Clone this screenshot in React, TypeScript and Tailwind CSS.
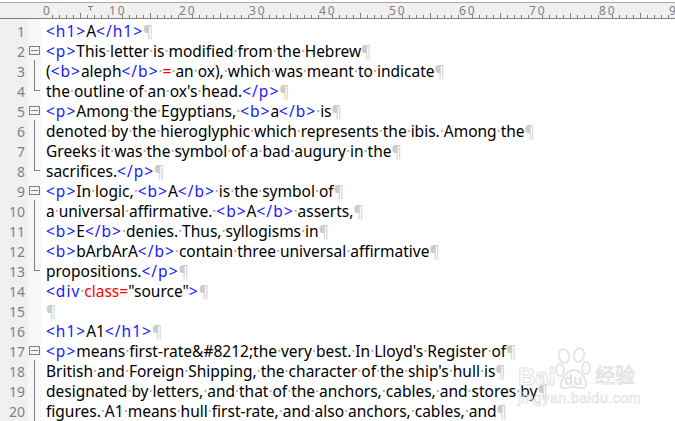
const BLUE = "text-[#1a1aff] tracking-[1px]";
const RED = "text-[#ff0000]";
const INK = "text-[#000000]";

type Seg = [string, string?];
type Line = { segs: Seg[]; fold?: "open" | "mid" | "end" };

const tag = (t: string): Seg => [t, BLUE];

const LINES: Line[] = [
  { segs: [tag("<h1>"), ["A"], tag("</h1>")] },
  { segs: [tag("<p>"), ["This letter is modified from the Hebrew"]], fold: "open" },
  { segs: [["("], tag("<b>"), ["aleph"], tag("</b>"), [" "], ["=", RED], [" an ox), which was meant to indicate"]], fold: "mid" },
  { segs: [["the outline of an ox's head."], tag("</p>")], fold: "end" },
  { segs: [tag("<p>"), ["Among the Egyptians, "], tag("<b>"), ["a"], tag("</b>"), [" is"]], fold: "open" },
  { segs: [["denoted by the hieroglyphic which represents the ibis. Among the"]], fold: "mid" },
  { segs: [["Greeks it was the symbol of a bad augury in the"]], fold: "mid" },
  { segs: [["sacrifices."], tag("</p>")], fold: "end" },
  { segs: [tag("<p>"), ["In logic, "], tag("<b>"), ["A"], tag("</b>"), [" is the symbol of"]], fold: "open" },
  { segs: [["a universal affirmative. "], tag("<b>"), ["A"], tag("</b>"), [" asserts,"]], fold: "mid" },
  { segs: [tag("<b>"), ["E"], tag("</b>"), [" denies. Thus, syllogisms in"]], fold: "mid" },
  { segs: [tag("<b>"), ["bArbArA"], tag("</b>"), [" contain three universal affirmative"]], fold: "mid" },
  { segs: [["propositions."], tag("</p>")], fold: "end" },
  { segs: [tag("<div"), [" "], ["class=", RED], ['"source"'], tag(">")] },
  { segs: [] },
  { segs: [tag("<h1>"), ["A1"], tag("</h1>")] },
  { segs: [tag("<p>"), ["means first-rate&#8212;the very best. In Lloyd's Register of"]], fold: "open" },
  { segs: [["British and Foreign Shipping, the character of the ship's hull is"]], fold: "mid" },
  { segs: [["designated by letters, and that of the anchors, cables, and stores by"]], fold: "mid" },
  { segs: [["figures. A1 means hull first-rate, and also anchors, cables, and"]], fold: "mid" },
];

// spaces are shown as faint dots, like the editor's "show all characters" mode
function Spaced({ text, color }: { text: string; color?: string }) {
  const parts = text.split(/( )/);
  return (
    <span className={color ?? INK}>
      {parts.map((p, i) =>
        p === " " ? (
          <span key={i} className="inline-block w-[4px] text-center text-[#a8a8a8]">
            ·
          </span>
        ) : (
          <span key={i}>{p}</span>
        ),
      )}
    </span>
  );
}

function Ruler() {
  const ticks = [];
  for (let i = 0; i <= 90; i++) {
    const x = 45 + i * 7;
    if (x > 675) break;
    const h = i % 10 === 0 ? 0 : i % 5 === 0 ? 5 : 3;
    if (h) ticks.push(<line key={i} x1={x + 0.5} x2={x + 0.5} y1={15} y2={15 - h} stroke="#808080" />);
  }
  const labels = ["0", "10", "20", "30", "40", "50", "60", "70", "80", "9"];
  return (
    <div className="relative h-[17px] bg-[#f0f0f0] border-y border-t-[#a8a8a8] border-b-[#808080] overflow-hidden">
      <svg width="675" height="15" className="absolute left-0 top-0">
        {ticks}
        <path d="M88 3.5h5M90.5 3.5v4" stroke="#808080" fill="none" />
      </svg>
      <div className="relative flex pl-[39px] pt-[2px] text-[12px] leading-[12px] text-[#808080] tracking-[2px]">
        {labels.map((n, i) => (
          <span key={n} className={i === 0 ? "w-[70px] shrink-0 pl-[4px]" : "w-[70px] shrink-0"}>
            {n}
          </span>
        ))}
      </div>
    </div>
  );
}

function FoldMark({ fold }: { fold?: Line["fold"] }) {
  if (fold === "open")
    return (
      <div className="flex flex-col h-full pt-[5px] pl-[1px]">
        <div className="w-[11px] h-[9px] border border-[#808080] flex items-center justify-center">
          <div className="w-[7px] h-[1px] bg-[#808080]" />
        </div>
        <div className="mt-[5px] ml-[5px] w-[1px] h-[1px] bg-[#808080]" />
      </div>
    );
  if (fold === "mid") return <div className="ml-[6px] h-full w-[1px] bg-[#808080]" />;
  if (fold === "end") return <div className="ml-[6px] h-[10px] w-[6px] border-l border-b border-[#808080]" />;
  return null;
}

function Watermark() {
  return (
    <div className="absolute left-[518px] top-[346px] w-[120px] h-[58px] pointer-events-none font-['Liberation_Sans',sans-serif]">
      <svg width="120" height="58" className="absolute left-0 top-0" fill="none" stroke="#e6e6e6" strokeWidth="2">
        <ellipse cx="46" cy="10" rx="5" ry="7" transform="rotate(-12 46 10)" />
        <ellipse cx="61" cy="9" rx="5" ry="7" transform="rotate(14 61 9)" />
        <ellipse cx="42" cy="24" rx="4" ry="6" />
        <ellipse cx="68" cy="22" rx="4" ry="6" />
        <path d="M43 38c1-8 8-14 13-14s11 6 12 13-5 5-12 4-14 5-13-3z" />
      </svg>
      <div className="flex items-start pt-[19px] h-[45px]">
        <span className="w-[46px] text-[24px] leading-[24px] font-bold text-transparent [-webkit-text-stroke:1px_#e2e2e2]">
          Bai
        </span>
        <span className="w-[31px] pt-[7px] text-[15px] leading-[15px] font-bold text-[#e0e0e0]">du</span>
        <span className="text-[20px] leading-[20px] text-transparent [-webkit-text-stroke:1px_#e2e2e2] font-['Noto_Sans_CJK_SC',sans-serif]">
          经验
        </span>
      </div>
      <div className="text-[14px] leading-[14px] text-transparent [-webkit-text-stroke:0.7px_#e2e2e2] tracking-[0.6px]">
        jingyan.baidu.com
      </div>
    </div>
  );
}

export default function App() {
  return (
    <div className="relative w-[675px] h-[421px] overflow-hidden bg-white pt-[2px] font-['Noto_Sans',sans-serif]">
      <Ruler />
      <div className="flex h-[2px]">
        <div className="w-[28px] bg-[#f0f0f0]" />
        <div className="w-[13px] bg-[#f7f7f7]" />
      </div>
      <div className="flex flex-col">
        {LINES.map((line, i) => (
          <div key={i} className="flex h-[20px] items-center">
            <div className="flex h-full items-center justify-end w-[28px] bg-[#f0f0f0] pr-[3px] text-[14px] text-[#808080]">
              {i + 1}
            </div>
            <div className="w-[13px] h-full bg-[#f7f7f7]">
              <FoldMark fold={line.fold} />
            </div>
            <div className="pl-[5px] whitespace-nowrap text-[15.5px] leading-[20px]">
              {line.segs.map((s, j) => (
                <Spaced key={j} text={s[0]} color={s[1]} />
              ))}
              <span className="text-[#cccccc]">¶</span>
            </div>
          </div>
        ))}
      </div>
      <Watermark />
    </div>
  );
}
